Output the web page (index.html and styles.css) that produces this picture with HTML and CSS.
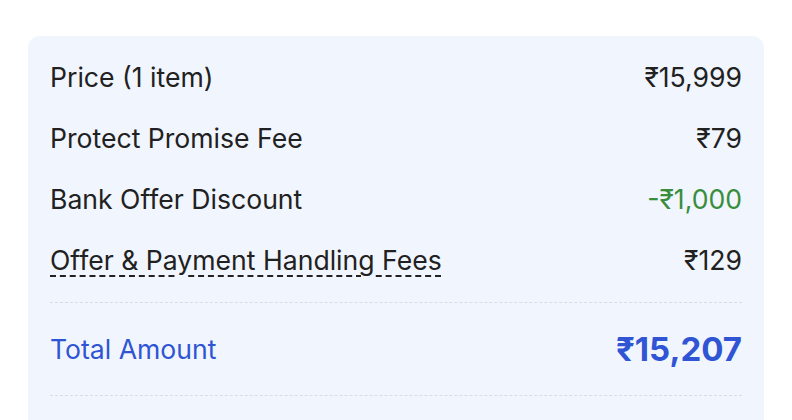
FILE: index.html
```html
<!DOCTYPE html>
<html lang="en">
<head>
<meta charset="utf-8">
<title>Price Details</title>
<link rel="stylesheet" href="styles.css">
</head>
<body>
  <div class="card">
    <div class="row">
      <span class="label">Price (1 item)</span>
      <span class="value">₹15,999</span>
    </div>
    <div class="row">
      <span class="label">Protect Promise Fee</span>
      <span class="value">₹79</span>
    </div>
    <div class="row">
      <span class="label">Bank Offer Discount</span>
      <span class="value green">-₹1,000</span>
    </div>
    <div class="row">
      <span class="label dotted">Offer &amp; Payment Handling Fees</span>
      <span class="value">₹129</span>
    </div>
    <div class="divider"></div>
    <div class="row total">
      <span class="label">Total Amount</span>
      <span class="value">₹15,207</span>
    </div>
    <div class="divider last"></div>
  </div>
</body>
</html>
```
FILE: styles.css
```css
html, body {
  margin: 0;
  background: #ffffff;
}
body {
  padding: 36px 28px 0 28px;
  font-family: Inter, "Noto Sans", "Liberation Sans", sans-serif;
  color: #212121;
  overflow: hidden;
  height: 420px;
  box-sizing: border-box;
}
.card {
  background: #f1f5fe;
  border-radius: 12px;
  padding: 10px 22px 0 22px;
  height: 400px;
  box-sizing: border-box;
}
.row {
  display: flex;
  justify-content: space-between;
  align-items: center;
  height: 61px;
  font-size: 26.6px;
}
.label, .value {
  line-height: 32px;
}
.green {
  color: #388e3c;
}
.dotted {
  text-decoration: underline dashed #212121;
  text-decoration-thickness: 1.5px;
  text-underline-offset: 6px;
}
.divider {
  border-top: 1.5px dashed #d9dce3;
  margin-top: 12px;
}
.divider.last {
  margin-top: 0;
}
.row.total {
  height: 92px;
  color: #2f55d4;
}
.row.total .value {
  font-size: 33px;
  font-weight: 700;
}
```
